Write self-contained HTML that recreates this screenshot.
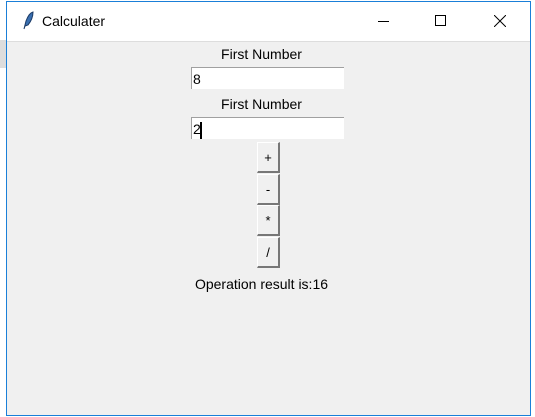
<!DOCTYPE html><html><head><style>
body{margin:0;width:535px;height:417px;background:#fff;position:relative;overflow:hidden;font-family:"Liberation Sans",sans-serif}
.win{position:absolute;left:6px;top:1px;width:523px;height:413px;border:1px solid #1a7fd8;background:#f0f0f0}
.tb{position:absolute;left:0;top:0;right:0;height:39px;background:#fff;border-bottom:1px solid #ddd}
.t{position:absolute;left:35px;top:11px;font-size:14px;color:#000}
.lab{position:absolute;width:523px;text-align:center;font-size:14px;color:#000;left:-7px}
.ent{position:absolute;left:184px;width:153px;height:22px;background:#fff;border-top:1px solid #a0a0a0;border-left:1px solid #a0a0a0;font-size:14px;line-height:22px;padding-left:1px;box-sizing:border-box}
.btn{position:absolute;left:250px;width:23px;height:31px;background:#f0f0f0;border-right:2px solid #777;border-bottom:2px solid #777;border-top:1px solid #fff;border-left:1px solid #fff;box-sizing:border-box;text-align:center;font-size:13px;line-height:29px}
</style></head><body>
<div style="position:absolute;left:0;top:40px;width:6px;height:28px;background:#ddd"></div>
<div class="win">
<div class="tb">
<svg style="position:absolute;left:14px;top:9px" width="14" height="20"><path d="M3 18 L5 10 Q8 2 12 1 Q12 8 7 14 L4 15 Z" fill="#3a6fb0" stroke="#1b3a66" stroke-width="1"/></svg>
<div class="t">Calculater</div>
<div style="position:absolute;left:371px;top:19px;width:11px;height:1px;background:#000"></div>
<div style="position:absolute;left:428px;top:13px;width:9px;height:9px;border:1px solid #000"></div>
<svg style="position:absolute;left:487px;top:13px" width="12" height="12"><path d="M0 0L12 12M12 0L0 12" stroke="#000" stroke-width="1"/></svg>
</div>
<div class="lab" style="top:44px">First Number</div>
<div class="ent" style="top:65px">8</div>
<div class="lab" style="top:94px">First Number</div>
<div class="ent" style="top:115px">2<span style="display:inline-block;width:2px;height:17px;background:#000;vertical-align:middle;margin-left:-1px"></span></div>
<div class="btn" style="top:140px">+</div>
<div class="btn" style="top:172px">-</div>
<div class="btn" style="top:203px">*</div>
<div class="btn" style="top:235px">/</div>
<div class="lab" style="top:274px;font-size:14px">Operation result is:16</div>
</div>
</body></html>
